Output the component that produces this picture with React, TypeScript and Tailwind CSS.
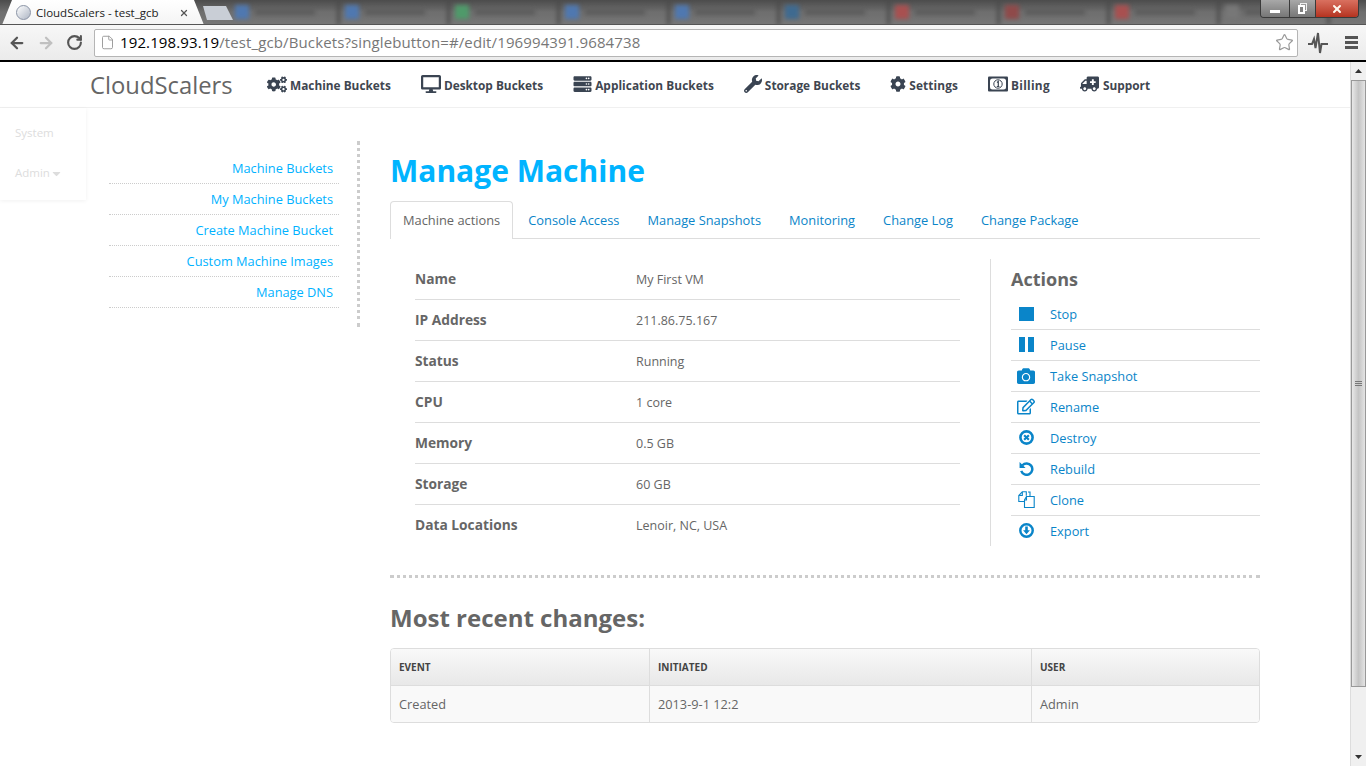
import React from 'react';
import { ArrowLeft, ArrowRight, RotateCw, File, Star, X } from 'lucide-react';
import { FaCogs, FaDesktop, FaServer, FaWrench, FaCog, FaAmbulance, FaCamera, FaRegEdit, FaCaretDown } from 'react-icons/fa';

type IconProps = { className?: string };

const BillIcon = ({ className }: IconProps) => (
  <svg className={className} viewBox="0 0 20 16">
    <rect width="20" height="15" y="0.500" fill="currentColor" rx="1" />
    <rect x="2" y="2.500" width="16" height="11" rx="2.500" fill="#fff" />
    <circle cx="10" cy="8" r="4.200" fill="none" stroke="currentColor" strokeWidth="1" />
    <path d="M9 6.500l1.300-1v5M8.800 10.500h2.600" fill="none" stroke="currentColor" strokeWidth="1.200" />
  </svg>
);

const StopIcon = ({ className }: IconProps) => (
  <svg className={className} viewBox="0 0 15 14" fill="currentColor">
    <rect width="15" height="14" />
  </svg>
);

const PauseIcon = ({ className }: IconProps) => (
  <svg className={className} viewBox="0 0 15 15" fill="currentColor">
    <rect width="6" height="15" />
    <rect x="9" width="6" height="15" />
  </svg>
);

const DestroyIcon = ({ className }: IconProps) => (
  <svg className={className} viewBox="0 0 14 14" fill="none" stroke="currentColor">
    <circle cx="7" cy="7" r="5.700" strokeWidth="2.400" />
    <path d="M4.800 4.800l4.400 4.400M9.200 4.800l-4.400 4.400" strokeWidth="2" />
  </svg>
);

const RebuildIcon = ({ className }: IconProps) => (
  <svg className={className} viewBox="0 0 14 14">
    <path d="M3.200 4A5.300 5.300 0 1 1 2.100 9.300" fill="none" stroke="currentColor" strokeWidth="2.300" />
    <path d="M0.500 1v5.600h5.600z" fill="currentColor" />
  </svg>
);

const CloneIcon = ({ className }: IconProps) => (
  <svg className={className} viewBox="0 0 17 17" fill="none" stroke="currentColor" strokeWidth="1.100">
    <path d="M6.500 10.500H.8V4.500l3.500-3.700h4v4" />
    <path d="M4.300 1v3.500H1" />
    <path d="M8 5.500h8.200v11H6.500V9l2-3.500" />
    <path d="M8.500 5.500V9H6.500" />
    <path d="M10 1l2 0 0 4.500" />
  </svg>
);

const ExportIcon = ({ className }: IconProps) => (
  <svg className={className} viewBox="0 0 14 14">
    <circle cx="7" cy="7" r="5.800" fill="none" stroke="currentColor" strokeWidth="2.300" />
    <path d="M5.800 3.200h2.400v3.600h2L7 10.500 3.800 6.800h2z" fill="currentColor" />
  </svg>
);

const navItems = [
  { label: 'Machine Buckets', icon: FaCogs, box: 'w-[23px]', size: 'h-[19px] w-[20px]', text: '' },
  { label: 'Desktop Buckets', icon: FaDesktop, box: 'w-[23px]', size: 'h-[20px] w-[20px]', text: '' },
  { label: 'Application Buckets', icon: FaServer, box: 'w-[22px]', size: 'h-[18px] w-[19px]', text: 'tracking-[0.05px]' },
  { label: 'Storage Buckets', icon: FaWrench, box: 'w-[21px]', size: 'h-[18px] w-[18px]', text: '' },
  { label: 'Settings', icon: FaCog, box: 'w-[19px]', size: 'h-[16px] w-[16px]', text: 'tracking-[0.1px]' },
  { label: 'Billing', icon: BillIcon, box: 'w-[23px]', size: 'h-[16px] w-[20px]', text: 'tracking-[0.3px]' },
  { label: 'Support', icon: FaAmbulance, box: 'w-[23px]', size: 'h-[18px] w-[19px] -scale-x-100', text: '' },
];

const sideLinks = ['Machine Buckets', 'My Machine Buckets', 'Create Machine Bucket', 'Custom Machine Images', 'Manage DNS'];
const tabs = ['Console Access', 'Manage Snapshots', 'Monitoring', 'Change Log', 'Change Package'];

const details = [
  ['Name', 'My First VM'],
  ['IP Address', '211.86.75.167'],
  ['Status', 'Running'],
  ['CPU', '1 core'],
  ['Memory', '0.5 GB'],
  ['Storage', '60 GB'],
  ['Data Locations', 'Lenoir, NC, USA'],
];

const actions = [
  { label: 'Stop', icon: StopIcon, size: 'h-[14px] w-[15px]' },
  { label: 'Pause', icon: PauseIcon, size: 'h-[15px] w-[15px]' },
  { label: 'Take Snapshot', icon: FaCamera, size: 'h-[18px] w-[18px]' },
  { label: 'Rename', icon: FaRegEdit, size: 'h-[17px] w-[18px]' },
  { label: 'Destroy', icon: DestroyIcon, size: 'h-[15px] w-[15px]' },
  { label: 'Rebuild', icon: RebuildIcon, size: 'h-[15px] w-[15px]' },
  { label: 'Clone', icon: CloneIcon, size: 'h-[17px] w-[17px]' },
  { label: 'Export', icon: ExportIcon, size: 'h-[15px] w-[15px]' },
];

const blurredTabs = ['bg-[#4f78b0]', 'bg-[#4f78b0]', 'bg-[#4f9a6a]', 'bg-[#4f78b0]', 'bg-[#4f78b0]', 'bg-[#3f6a90]', 'bg-[#a85050]', 'bg-[#8f4a4a]', 'bg-[#a85050]', 'bg-[#777]'];

function BrowserChrome() {
  return (
    <div className="h-[62px] shrink-0 border-b-2 border-black bg-[#f2f2f2]">
      <div className="relative h-[25px] overflow-hidden border-b border-[#555] bg-gradient-to-b from-[#4c4c4c] via-[#6e6e6e] to-[#767676]">
        <div className="flex h-full items-center pl-[230px] blur-[2px]">
          {blurredTabs.map((c, i) => (
            <div key={i} className="flex h-[26px] w-[110px] items-center gap-[6px] border-r-[3px] border-[#4a4a4a] pl-[5px]">
              <div className={`h-[14px] w-[14px] ${c}`} />
              <div className="h-[6px] w-[60px] bg-[#5c5c5c]" />
            </div>
          ))}
        </div>
        <div className="absolute left-[2px] top-0 flex h-[25px] w-[202px] items-center bg-gradient-to-b from-white to-[#f4f4f4] pl-[14px] [clip-path:polygon(0_100%,10px_0,calc(100%-10px)_0,100%_100%)]">
          <div className="h-[15px] w-[15px] rounded-full border border-[#8a93a5] bg-gradient-to-br from-white to-[#aeb6c4]" />
          <span className="ml-[5px] text-[11.5px] text-[#222]">CloudScalers - test_gcb</span>
          <X className="absolute right-[15px] top-[8px] h-[10px] w-[10px] text-[#555]" strokeWidth={3} />
        </div>
        <div className="absolute left-[203px] top-[6px] h-[14px] w-[30px] bg-[#c9ced6] [clip-path:polygon(0_0,23px_0,100%_100%,4px_100%)]" />
        <div className="absolute right-[7px] top-0 flex h-[18px] w-[99px] overflow-hidden rounded-b-[4px] border border-t-0 border-[#3a3a3a]">
          <div className="flex w-[28px] items-center justify-center bg-gradient-to-b from-[#a8a8a8] to-[#777]">
            <div className="mt-[5px] h-[3px] w-[10px] bg-white" />
          </div>
          <div className="relative flex w-[27px] items-center justify-center border-x border-[#3a3a3a] bg-gradient-to-b from-[#a8a8a8] to-[#777]">
            <div className="absolute left-[10px] top-[3px] h-[8px] w-[7px] border border-[#eee]" />
            <div className="absolute left-[8px] top-[5px] h-[9px] w-[7px] border-2 border-white bg-[#808080]" />
          </div>
          <div className="flex flex-1 items-center justify-center bg-gradient-to-b from-[#d9705f] to-[#b5321f]">
            <X className="h-[12px] w-[12px] text-[#fff8ee]" strokeWidth={4} />
          </div>
        </div>
      </div>
      <div className="flex h-[35px] items-center bg-gradient-to-b from-[#f7f7f7] to-[#ebebeb] pl-[8px]">
        <ArrowLeft className="h-[18px] w-[18px] text-[#555]" strokeWidth={3} />
        <ArrowRight className="ml-[11px] h-[18px] w-[18px] text-[#c0c0c0]" strokeWidth={3} />
        <RotateCw className="ml-[11px] h-[17px] w-[17px] text-[#555]" strokeWidth={3} />
        <div className="ml-[11px] flex h-[28px] w-[1204px] items-center rounded-[2px] border border-[#b5b5b5] bg-white pl-[5px] pr-[2px]">
          <File className="h-[15px] w-[15px] text-[#999]" strokeWidth={1.5} />
          <span className="ml-[5px] flex-1 text-[15px] tracking-[0.12px] text-[#777]">
            <span className="text-black">192.198.93.19</span>/test_gcb/Buckets?singlebutton=#/edit/196994391.9684738
          </span>
          <Star className="mr-[1px] h-[19px] w-[19px] text-[#999]" strokeWidth={1.5} />
        </div>
        <svg className="ml-[10px] h-[22px] w-[20px] text-[#555]" viewBox="0 0 20 22" fill="none" stroke="currentColor" strokeWidth="2">
          <path d="M0 12h4l2-5 1.500 9L10 1l2 20 1.500-9H20" />
        </svg>
        <div className="ml-[17px] flex w-[13px] flex-col gap-[2px]">
          <div className="h-[3px] bg-[#555]" />
          <div className="h-[3px] bg-[#555]" />
          <div className="h-[3px] bg-[#555]" />
        </div>
      </div>
    </div>
  );
}

function TopNav() {
  return (
    <header className="flex h-[46px] shrink-0 items-center border-b border-[#f0f0f0] pl-[90px]">
      <span className="mt-[2px] w-[177px] text-[23.8px] text-[#666]">CloudScalers</span>
      <nav className="flex items-center gap-[30px]">
        {navItems.map((n) => (
          <a key={n.label} className="flex items-center text-[11.85px] font-bold text-[#3f4650]">
            <span className={`flex ${n.box}`}>
              <n.icon className={`${n.size} text-[#3a4452]`} />
            </span>
            <span className={`mt-[3px] ${n.text}`}>{n.label}</span>
          </a>
        ))}
      </nav>
    </header>
  );
}

function Sidebar() {
  return (
    <div className="flex shrink-0">
      <div className="h-[92px] w-[86px] shadow-[0_1px_4px_rgba(0,0,0,0.06)]">
        <div className="flex h-[50px] items-center pl-[15px] text-[11.5px] text-[#ddd]">System</div>
        <div className="flex h-[30px] items-center pl-[15px] text-[11.5px] text-[#ddd]">
          Admin
          <FaCaretDown className="ml-[2px] h-[13px] w-[9px]" />
        </div>
      </div>
      <ul className="ml-[23px] mt-[45px] h-fit w-[230px]">
        {sideLinks.map((l) => (
          <li key={l} className="flex h-[31px] items-center justify-end border-b border-dotted border-[#ccc] pr-[6px] pt-[2px] text-[12.8px] text-[#00b2ff]">
            {l}
          </li>
        ))}
      </ul>
      <div className="ml-[18px] mt-[33px] h-[186px] w-[3px] border-r-[3px] border-dotted border-[#ccc]" />
    </div>
  );
}

function DetailsTable() {
  return (
    <div className="ml-[25px] w-[545px]">
      {details.map(([k, v], i) => (
        <div key={k} className={`flex h-[41px] items-center ${i < details.length - 1 ? 'border-b border-[#ddd]' : ''}`}>
          <span className="w-[221px] text-[13.75px] font-bold text-[#666]">{k}</span>
          <span className="mt-[2px] text-[12.5px] text-[#666]">{v}</span>
        </div>
      ))}
    </div>
  );
}

function ActionsPanel() {
  return (
    <div className="ml-[30px] w-[270px] border-l border-[#ddd] pl-[20px]">
      <h3 className="mt-[6px] h-[34px] text-[18px] leading-[28px] font-bold text-[#666]">Actions</h3>
      <ul>
        {actions.map((a, i) => {
          const last = i === actions.length - 1;
          return (
            <li key={a.label} className={`flex items-center pt-[2px] text-[12.8px] text-[#0a85c9] ${last ? 'h-[30px]' : 'h-[31px] border-b border-[#ddd]'}`}>
              <span className="-mt-[3px] flex w-[30px] justify-center">
                <a.icon className={`${a.size} text-[#0a85c9]`} />
              </span>
              <span className="ml-[9px]">{a.label}</span>
            </li>
          );
        })}
      </ul>
    </div>
  );
}

function RecentChanges() {
  return (
    <section>
      <h2 className="mt-[24px] h-[46px] text-[24px] leading-[32px] font-bold text-[#666]">Most recent changes:</h2>
      <div className="overflow-hidden rounded-[4px] border border-[#ddd]">
        <div className="flex h-[37px] items-center border-b border-[#ddd] bg-gradient-to-b from-[#f9f9f9] to-[#e8e8e8] text-[10px] font-bold text-[#444]">
          <div className="flex h-[36px] w-[259px] items-center border-r border-[#ddd] pl-[8px]">EVENT</div>
          <div className="flex h-[36px] w-[382px] items-center border-r border-[#ddd] pl-[8px]">INITIATED</div>
          <div className="pl-[8px]">USER</div>
        </div>
        <div className="flex h-[36px] items-center bg-[#f9f9f9] text-[12.75px] text-[#666]">
          <div className="flex h-full w-[259px] items-center border-r border-[#ddd] pl-[8px] pt-[2px]">Created</div>
          <div className="flex h-full w-[382px] items-center border-r border-[#ddd] pl-[8px] pt-[2px]">2013-9-1 12:2</div>
          <div className="pl-[8px] pt-[2px]">Admin</div>
        </div>
      </div>
    </section>
  );
}

function Scrollbar() {
  return (
    <div className="flex w-[16px] shrink-0 flex-col border-l border-[#ddd] bg-[#f0f0f0]">
      <div className="flex h-[18px] items-center justify-center">
        <svg className="h-[4px] w-[7px] text-[#333]" viewBox="0 0 7 4" fill="currentColor">
          <path d="M3.500 0L7 4H0z" />
        </svg>
      </div>
      <div className="flex h-[607px] items-center justify-center border border-[#999] bg-gradient-to-r from-[#e8e8e8] via-[#c4c4c4] to-[#e4e4e4]">
        <div className="flex w-[7px] flex-col gap-[1px]">
          <div className="h-[1px] bg-[#777]" />
          <div className="h-[1px] bg-[#777]" />
          <div className="h-[1px] bg-[#777]" />
        </div>
      </div>
      <div className="flex flex-1 items-end justify-center pb-[7px]">
        <svg className="h-[4px] w-[7px] text-[#333]" viewBox="0 0 7 4" fill="currentColor">
          <path d="M0 0h7L3.500 4z" />
        </svg>
      </div>
    </div>
  );
}

export default function App() {
  return (
    <div className="flex h-[766px] w-[1366px] flex-col overflow-hidden bg-white font-['Open_Sans',sans-serif]">
      <BrowserChrome />
      <div className="flex min-h-0 flex-1">
        <div className="flex min-w-0 flex-1 flex-col">
          <TopNav />
          <div className="flex flex-1">
            <Sidebar />
            <main className="ml-[30px] w-[870px]">
              <h1 className="mt-[43px] h-[50px] text-[30px] leading-[40px] font-bold text-[#00b4ff]">Manage Machine</h1>
              <div className="flex h-[38px] gap-[2px] border-b border-[#ddd] text-[12.85px] text-[#0a85c9]">
                <div className="flex h-[38px] items-center rounded-t-[4px] border border-b-0 border-[#ddd] bg-white px-[12px] text-[#666]">Machine actions</div>
                {tabs.map((t) => (
                  <div key={t} className="flex h-[38px] items-center border border-b-0 border-transparent px-[12px]">{t}</div>
                ))}
              </div>
              <div className="mt-[20px] flex">
                <DetailsTable />
                <ActionsPanel />
              </div>
              <div className="mt-[29px] border-t-[3px] border-dotted border-[#ccc]" />
              <RecentChanges />
            </main>
          </div>
        </div>
        <Scrollbar />
      </div>
    </div>
  );
}
